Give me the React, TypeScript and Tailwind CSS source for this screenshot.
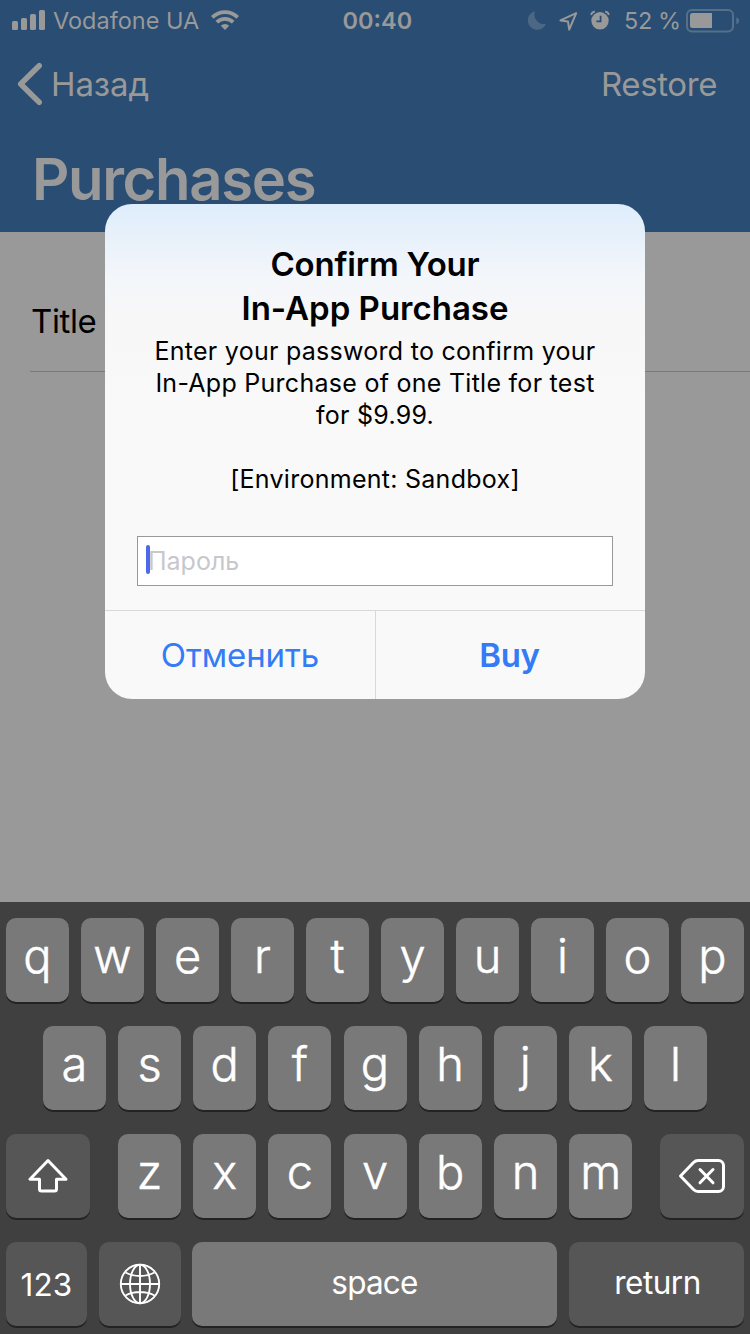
import React from "react";

function SignalIcon() {
  return (
    <svg className="mb-[2px]" width="34" height="22" viewBox="0 0 34 22" fill="currentColor">
      <rect x="0" y="12" width="6" height="9" rx="1.6" />
      <rect x="9" y="9" width="6" height="12" rx="1.6" />
      <rect x="18" y="5" width="6" height="16" rx="1.6" />
      <rect x="27" y="1" width="6" height="20" rx="1.6" />
    </svg>
  );
}

function WifiIcon() {
  return (
    <svg className="mb-[2px]" width="28" height="20" viewBox="0 0 28 20" fill="none" stroke="currentColor" strokeWidth="3.8">
      <path d="M1.3 7.3a18 18 0 0 1 25.4 0" />
      <path d="M5.8 12.200a11.6 11.6 0 0 1 16.4 0" />
      <path d="M14 20l-4.2-4.2a6 6 0 0 1 8.4 0z" fill="currentColor" stroke="none" />
    </svg>
  );
}

function MoonIcon() {
  return (
    <svg className="mb-[2px]" width="18" height="19" viewBox="0 0 18 19" fill="#4b6783">
      <path d="M7 .3A9.6 9.6 0 0 0 17.9 12.9 9.4 9.4 0 1 1 7 .3z" />
    </svg>
  );
}

function LocationIcon() {
  return (
    <svg className="ml-[13px]" width="19" height="19" viewBox="0 0 19 19" fill="none" stroke="currentColor" strokeWidth="2" strokeLinejoin="round">
      <path d="M17.200 1.2L1.400 8.4l7.600 1.200L10.200 17.600z" />
    </svg>
  );
}

function AlarmIcon() {
  return (
    <svg className="mb-[2px] ml-[12px]" width="20" height="20" viewBox="0 0 20 20" fill="none">
      <circle cx="10" cy="10.8" r="8.7" fill="currentColor" />
      <path d="M10.6 5.8v5.5H6.4" stroke="#294d73" strokeWidth="1.7" />
      <path d="M1 4.8A5 5 0 0 1 4.800 1.600M19 4.800A5 5 0 0 0 15.200 1.600" stroke="currentColor" strokeWidth="2" />
    </svg>
  );
}

function BatteryIcon() {
  return (
    <svg width="54" height="24" viewBox="0 0 54 24" fill="none">
      <rect x="1" y="1" width="46" height="21.4" rx="5" stroke="#56708a" strokeWidth="2" />
      <path d="M50.3 8.2c3.8 1.6 3.8 5.6 0 7.2z" fill="#56708a" />
      <path d="M26 4v15H6.500a2.500 2.500 0 0 1-2.500-2.500v-10A2.500 2.500 0 0 1 6.500 4z" fill="#999999" />
    </svg>
  );
}

function StatusBar() {
  return (
    <div className="flex h-[42px] items-center pl-3 text-[23.5px] leading-10 whitespace-nowrap">
      <SignalIcon />
      <span className="ml-[7px] w-[158px]">Vodafone UA</span>
      <WifiIcon />
      <span className="ml-[103.5px] w-[185.5px] font-semibold">00:40</span>
      <MoonIcon />
      <LocationIcon />
      <AlarmIcon />
      <span className="ml-[14px] w-[62px] tracking-[-0.4px]">52 %</span>
      <BatteryIcon />
    </div>
  );
}

function Header() {
  return (
    <header className="h-[232px] bg-[#294d73] text-[#999999]">
      <StatusBar />
      <div className="flex h-[86px] items-center justify-between pr-[33px] pl-[17px] text-[33px]">
        <div className="flex items-center">
          <svg className="mb-[2px]" width="26" height="44" viewBox="0 0 26 44" fill="none" stroke="currentColor" strokeWidth="5.500" strokeLinecap="round" strokeLinejoin="round">
            <path d="M22.200 3.700L3.700 22l18.500 18.300" />
          </svg>
          <span className="ml-[8px] tracking-[-0.1px]">Назад</span>
        </div>
        <span className="tracking-[-0.4px]">Restore</span>
      </div>
      <h1 className="pl-[32px] text-[58px] leading-[102px] font-semibold tracking-[-1.350px]">Purchases</h1>
    </header>
  );
}

function Dialog() {
  return (
    <div role="dialog" className="absolute top-[204px] left-[105px] flex h-[495px] w-[540px] flex-col overflow-hidden rounded-[27px] bg-[#f9f9f9] bg-[linear-gradient(180deg,#deedfc_0px,#e8f1fa_34px,#f3f6fa_72px,#f7f7f8_110px,#f9f9f9_210px)] text-center text-black">
      <h2 className="pt-[38px] text-[33px] leading-[44px] font-semibold">
        <span className="tracking-[-0.2px]">Confirm Your</span>
        <br />
        In-App Purchase
      </h2>
      <p className="mt-[5px] h-[201px] text-[25px] leading-8 tracking-[0.27px] whitespace-nowrap">
        Enter your password to confirm your
        <br />
        In-App Purchase of one Title for test
        <br />
        for $9.99.
        <br />
        <br />
        [Environment: Sandbox]
      </p>
      <div className="mx-8 flex h-[50px] items-center border border-[#999999] bg-white pl-[8px]">
        <div className="z-10 mb-[3px] h-[29px] w-1 rounded-[2px] bg-[#4a6be8]" />
        <span className="mt-[2px] -ml-[2px] text-[25px] text-[#c7c7cc]">Пароль</span>
      </div>
      <div className="mt-6 flex h-[89px] border-t border-[#d9d9db] text-[33px] leading-[88px] text-[#347bf6]">
        <button className="w-[271px] border-r border-[#d9d9db] tracking-[-0.1px]">Отменить</button>
        <button className="flex-1 pr-[2px] font-semibold tracking-[-0.3px]">Buy</button>
      </div>
    </div>
  );
}

function Key({ children }: { children: React.ReactNode }) {
  return (
    <div className="flex h-[84px] w-[63px] shrink-0 items-center justify-center rounded-[10px] bg-[#797979] pb-[7px] text-[47px] font-light shadow-[0_2px_0_#232323] [-webkit-text-stroke:0.5px_white]">
      {children}
    </div>
  );
}

function ShiftIcon() {
  return (
    <svg width="40" height="36" viewBox="0 0 40 36" fill="none" stroke="white" strokeWidth="3" strokeLinejoin="round">
      <path d="M20 2.500L2 21.200h9.500V31a2 2 0 0 0 2 2h13a2 2 0 0 0 2-2v-9.800H38z" />
    </svg>
  );
}

function GlobeIcon() {
  return (
    <svg width="42" height="42" viewBox="0 0 42 42" fill="none" stroke="white" strokeWidth="1.9">
      <circle cx="21" cy="21" r="19.200" />
      <ellipse cx="21" cy="21" rx="10" ry="19.200" />
      <path d="M21 1.500v39M1.500 21h39M6.500 9.500c8.500 4.600 20.500 4.600 29 0M6.500 32.500c8.500-4.600 20.500-4.600 29 0" />
    </svg>
  );
}

function DeleteIcon() {
  return (
    <svg width="48" height="36" viewBox="0 0 48 36" fill="none" stroke="white" strokeWidth="3" strokeLinecap="round" strokeLinejoin="round">
      <path d="M2.500 18L15.500 4.500Q17.500 2.500 20 2.500H40.500a5 5 0 0 1 5 5V28.500a5 5 0 0 1-5 5H20Q17.500 33.500 15.500 31.500z" />
      <path d="M22 11.500L35 24.800M35 11.500L22 24.800" />
    </svg>
  );
}

function Keyboard() {
  return (
    <div className="flex h-[432px] flex-col gap-6 bg-[#404040] px-[6px] pt-4 text-white">
      <div className="flex justify-between">
        {"qwertyuiop".split("").map((k) => (
          <Key key={k}>{k}</Key>
        ))}
      </div>
      <div className="flex justify-between px-[37px]">
        {"asdfghjkl".split("").map((k) => (
          <Key key={k}>{k}</Key>
        ))}
      </div>
      <div className="flex justify-between">
        <div className="flex h-[84px] w-[84px] items-center justify-center rounded-[10px] bg-[#565656] shadow-[0_2px_0_#232323]">
          <ShiftIcon />
        </div>
        <div className="ml-[0.2px] flex w-[514.4px] justify-between">
          {"zxcvbnm".split("").map((k) => (
            <Key key={k}>{k}</Key>
          ))}
        </div>
        <div className="flex h-[84px] w-[84px] items-center justify-center rounded-[10px] bg-[#565656] shadow-[0_2px_0_#232323]">
          <DeleteIcon />
        </div>
      </div>
      <div className="flex text-[31.5px]">
        <div className="mr-3 flex h-[84px] w-[81px] items-center justify-center rounded-[10px] bg-[#565656] pt-[2px] tracking-[0.1px] shadow-[0_2px_0_#232323]">
          123
        </div>
        <div className="mr-[11px] flex h-[84px] w-[82px] items-center justify-center rounded-[10px] bg-[#565656] shadow-[0_2px_0_#232323]">
          <GlobeIcon />
        </div>
        <div className="mr-3 flex h-[84px] w-[365px] items-center justify-center rounded-[10px] bg-[#797979] pb-[2px] tracking-[-0.8px] shadow-[0_2px_0_#232323]">
          space
        </div>
        <div className="flex h-[84px] w-[175px] items-center justify-center rounded-[10px] bg-[#565656] pb-[2px] pl-[2px] tracking-[-0.5px] shadow-[0_2px_0_#232323]">
          return
        </div>
      </div>
    </div>
  );
}

export default function App() {
  return (
    <div className="relative h-[1334px] w-[750px] overflow-hidden bg-[#999999] font-['Inter','Liberation_Sans',sans-serif]">
      <Header />
      <main className="h-[670px] pt-[50px]">
        <div className="ml-[30px] h-[90px] border-b border-[#7a7a7c] pl-[1px] text-[33px] leading-[79px] tracking-[-0.4px] text-black">
          Title for test
        </div>
      </main>
      <Keyboard />
      <Dialog />
    </div>
  );
}
